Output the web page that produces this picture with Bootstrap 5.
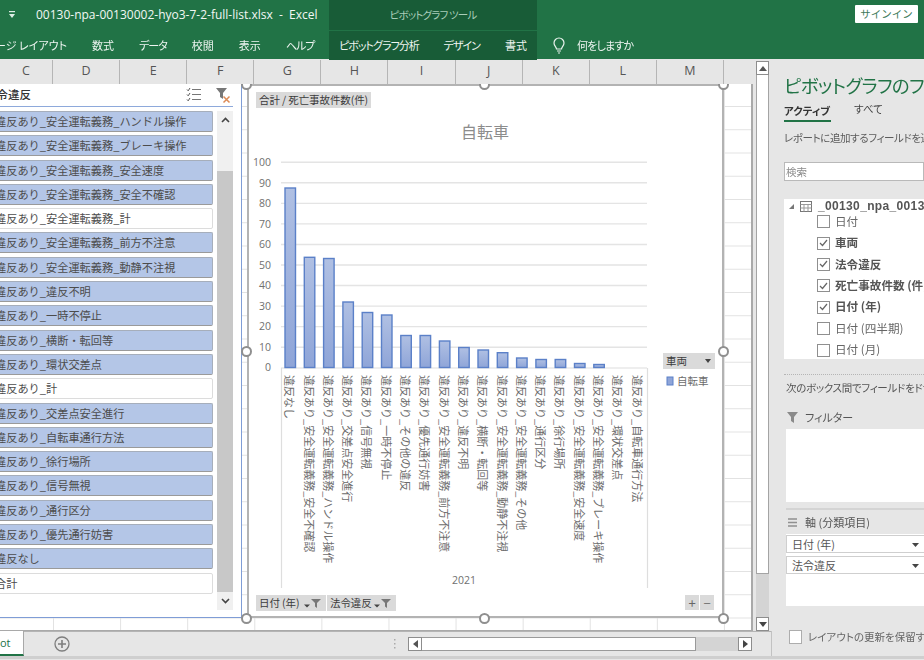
<!DOCTYPE html>
<html lang="ja">
<head>
<meta charset="utf-8">
<title>Excel</title>
<link rel="stylesheet" href="https://cdn.jsdelivr.net/npm/bootstrap@5.3.0/dist/css/bootstrap.min.css">
<style>
html,body{margin:0;width:924px;height:660px;overflow:hidden;background:#e6e6e6}
body{font-family:"Noto Sans CJK JP","Liberation Sans",sans-serif;font-size:11px;color:#444;line-height:1}
.app-frame{width:924px;height:660px;filter:blur(.4px)}
header,.pivot-panel{font-feature-settings:"palt"}
.top-row{display:flex;background:#217346;color:#fff}
.row-title{height:30px}.row-tabs{height:29px}
.seg-left{width:329px;flex:none;overflow:hidden}
.seg-ctx{width:208px;flex:none;background:#185c37}
.row-title .seg-ctx{text-align:center;line-height:30px;color:#a9cdb9;font-size:10.5px;letter-spacing:-.8px}
.qat-icon{margin:0 20px 0 8px;flex:none}
.file-name{font-family:"Open Sans","Liberation Sans",sans-serif;font-size:12px;color:#f2f7f4;white-space:pre;flex:none}
.sign-in{width:63px;height:18px;padding:0;background:#fff;color:#3e7a59;font-size:10.5px;border:0;border-radius:1px;margin:5px 6px 0 auto;line-height:18px}
.tab-txt{font-size:11px;line-height:29px;color:#eef5f1;white-space:nowrap;position:relative;top:1px}
.tabs-left{gap:25px}
.first-tab{margin-left:-16px}
.kana-tab{letter-spacing:-1px}
.tabs-ctx{padding-left:10px;gap:25px}
.ask-txt{margin-left:11px;letter-spacing:-.8px}
.bulb-icon{margin:7px 0 0 15px}
.work-row{height:597px;display:flex}
.sheet-col{width:772px;flex:none;border-right:1px solid #c2c2c2;display:flex;flex-direction:column}
.sheet-upper{flex:1;display:flex;min-height:0}
.sheet-wrap{width:753px;flex:none;display:flex;flex-direction:column;padding-top:1px}
.col-heads{height:24px;display:flex;background:#e6e6e6;flex:none}
.col-head{width:67.1px;flex:none;text-align:center;line-height:22px;font-size:12.5px;color:#555;border-right:1px solid #b5b5b5;font-family:"Open Sans","Liberation Sans",sans-serif}
.col-head.first-col{width:53px}
.grid-area{flex:1;position:relative;overflow:hidden;background-color:#fff;border:solid #a9a9a9;border-width:0 2px 1px 0;
background-image:linear-gradient(90deg,#e2e2e2 1px,transparent 1px),linear-gradient(#e2e2e2 1px,transparent 1px);
background-size:67.1px 100%,100% 23.25px;background-position:53px 0,0 22px}
.vscroll{width:19px;flex:none;padding:2px 3px 0 3px;display:flex;flex-direction:column;background:#e6e6e6}
.sb-btn{background:#fff;border:1px solid #8d8d8d;display:flex;align-items:center;justify-content:center;flex:none}
.v-btn{height:14px}
.v-thumb{height:499px;background:#fff;border:1px solid #a4a4a4;border-top:0;flex:none}
.v-track{flex:1;background:#d4d4d4}
.slicer-box{position:absolute;left:-3px;top:0;width:245px;height:534px;background:#fff;border:solid #7f9dd6;border-width:0 1.5px 1.5px 0;overflow:hidden}
.slicer-head{height:23px;width:236px;border-bottom:1.5px solid #8ea9db;display:flex;align-items:center;position:relative;font-size:11.5px;color:#333;white-space:nowrap}
.slicer-head span{margin-left:-12px;font-weight:500}
.sl-icon{position:absolute;top:3px}
.slicer-body{display:flex;padding-top:4px}
.sl-list{width:216px;display:flex;flex-direction:column;gap:3.3px;flex:none}
.sl-item{height:21px;background:#b4c6e7;border:1px solid #a6aebb;border-bottom:1.5px solid #9a9a9a;border-radius:2px;line-height:19px;font-size:11.2px;color:#4c4c4c;margin-left:-6px;white-space:nowrap;width:222px;padding-left:3px;overflow:hidden}
.sl-item.off{background:#fff;border-color:#dcdcdc}
.sl-scroll{width:16px;margin-left:4px;display:flex;flex-direction:column;height:499px;background:#c8c8c8;flex:none}
.sl-up{height:60px;background:#f0f0f0;display:flex;justify-content:center;padding-top:6px;flex:none}
.sl-down{height:18px;background:#f0f0f0;display:flex;justify-content:center;align-items:center;margin-top:auto;flex:none}
.chart-box{position:absolute;left:247px;top:0;width:477px;height:534px;background:#fff;border:2px solid #b3b3b3;border-top-width:2px}
.chart-svg{display:block;position:absolute;left:-2px;top:-2px}
.chart-tag{position:absolute;background:#dadada;color:#3c3c3c;font-size:10.5px;height:16px;line-height:16px;white-space:nowrap;display:flex;align-items:center;padding:0 3px;letter-spacing:-.1px}
.handle{position:absolute;width:11px;height:11px;border-radius:50%;background:#fff;border:2px solid #8f8f8f}
.tab-bar{height:25px;flex:none;display:flex;align-items:center;border-top:1px solid #b4b4b4;background:#e6e6e6;position:relative}
.sheet-tab{width:24px;height:25px;margin-top:-1px;background:#fff;border-right:1px solid #a8a8a8;border-bottom:2px solid #217346;color:#217346;font-size:11px;line-height:23px;text-align:right;padding-right:13px;flex:none;font-family:"Open Sans",sans-serif}
.add-icon{margin-left:30px}
.split-dots{margin-left:323px}
.hscroll{display:flex;height:14px;margin-left:12px;width:344px}
.h-btn{width:14px}
.h-thumb{width:274px;background:#fff;border:1px solid #9a9a9a;border-left:0;flex:none}
.h-track{flex:1;background:#d4d4d4}
.pivot-panel{flex:1;min-width:0;overflow:hidden;background:#e6e6e6;padding-left:12px;position:relative;white-space:nowrap}
.pv-title{font-size:18.5px;color:#217346;margin:16px 0 0;line-height:20px;font-weight:400;letter-spacing:-.6px}
.pv-tabs{display:flex;gap:23px;margin-top:9px;font-size:10.5px;height:22px;color:#444}
.pv-active{font-weight:700;border-bottom:2px solid #217346;width:47px;height:18px;line-height:13px;color:#333}
.pv-note{font-size:10.5px;margin-top:5px;color:#5c5c5c;height:14px;line-height:14px;letter-spacing:-.4px}
.pv-search{height:19px;margin-top:17px;background:#fff;border:1px solid #b9b9b9;color:#8a8a8a;font-size:10.5px;line-height:17px;padding-left:1px}
.pv-fields{height:160px;margin-top:18px;background:#fff;padding-top:1px;overflow:hidden}
.pv-root{display:flex;align-items:center;height:11px;font-weight:700;font-size:12px;color:#555;font-family:"Liberation Sans",sans-serif;letter-spacing:.35px}
.pv-root svg{flex:none}
.pv-field{display:flex;align-items:center;height:21.4px;padding-left:33px;font-size:11.6px;color:#666}
.pv-field.on{font-weight:700;color:#555}
.cb-box{width:13px;height:13px;flex:none;margin-right:5px;background:#fff;border:1px solid #8f8f8f;display:flex;align-items:center;justify-content:center}
.pv-dots{border-top:1px dotted #b5b5b5;margin-top:15px}
.pv-drag{font-size:10.5px;margin:6px 0 0 2px;color:#555;height:14px;line-height:14px;letter-spacing:-.3px}
.pv-zone-head{display:flex;align-items:center;gap:7px;height:14px;margin-left:3px;font-size:11px;color:#555}
.pv-filter-head{margin-top:15px}
.pv-box{background:#fff;margin-left:2px;height:73px;margin-top:5px}
.pv-split{border-top:2px solid #d4d4d4;margin:6px 0 0 2px}
.pv-axis-head{margin-top:5px}
.pv-axis-box{height:72px;padding-top:1px;display:flex;flex-direction:column;gap:3px}
.pv-pill{height:18px;background:#fff;border:1px solid #cfcfcf;border-width:1px 0 1px 1px;font-size:11px;color:#555;line-height:16px;padding-left:5px;position:relative}
.pill-arrow{position:absolute;left:125px;top:7px}
.pv-hold{display:flex;align-items:center;margin:24px 0 0 5px;font-size:10.5px;color:#666}
.pv-hold .cb-box{margin-right:6px;border-color:#adadad;height:14px}
.bottom-strip{height:3px;background:#cfcfcf}
</style>
</head>
<body>
<div class="app-frame">
  <header>
    <div class="top-row row-title">
      <div class="seg-left d-flex align-items-center">
        <svg class="qat-icon" width="8" height="8" viewBox="0 0 8 8"><rect x="1" y="0" width="6" height="1.2" fill="#dfeee6"/><path d="M1 3h6L4 7z" fill="#dfeee6"/></svg>
        <span class="file-name">00130-npa-00130002-hyo3-7-2-full-list.xlsx  -  Excel</span>
      </div>
      <div class="seg-ctx">ピボットグラフ ツール</div>
      <button type="button" class="btn sign-in">サインイン</button>
    </div>
    <div class="top-row row-tabs">
      <div class="seg-left d-flex tabs-left tab-txt"><span class="first-tab">ページ レイアウト</span><span>数式</span><span class="kana-tab">データ</span><span>校閲</span><span>表示</span><span class="kana-tab">ヘルプ</span></div>
      <div class="seg-ctx d-flex tabs-ctx tab-txt"><span class="kana-tab">ピボットグラフ分析</span><span class="kana-tab">デザイン</span><span>書式</span></div>
      <svg class="bulb-icon" width="14" height="18" viewBox="0 0 14 18" fill="none" stroke="#e8f2ec" stroke-width="1.2"><path d="M4.5 12c0-2-2.5-3-2.5-6a5 5 0 0 1 10 0c0 3-2.5 4-2.5 6z"/><path d="M5 14h4M6 16h2"/></svg>
      <span class="tab-txt ask-txt">何をしますか</span>
    </div>
  </header>
  <div class="work-row">
    <div class="sheet-col">
      <div class="sheet-upper">
        <div class="sheet-wrap">
          <div class="col-heads">
            <div class="col-head first-col">C</div><div class="col-head">D</div><div class="col-head">E</div><div class="col-head">F</div><div class="col-head">G</div><div class="col-head">H</div><div class="col-head">I</div><div class="col-head">J</div><div class="col-head">K</div><div class="col-head">L</div><div class="col-head">M</div>
          </div>
          <div class="grid-area">
            <div class="slicer-box">
              <div class="slicer-head"><span>法令違反</span>
                <svg class="sl-icon" style="left:189px" width="16" height="15" viewBox="0 0 16 15" fill="none" stroke="#777" stroke-width="1"><path d="M6 2.5h9M6 7.5h9M6 12.5h9"/><path d="M1 2.5l1.2 1.3L4 1M1 7.5l1.2 1.3L4 6M1 12.5l1.2 1.3L4 11" stroke="#555"/></svg>
                <svg class="sl-icon" style="left:218px" width="17" height="17" viewBox="0 0 17 17"><path d="M1 1h11L8 6v6L5 10V6z" fill="#777"/><path d="M8.5 9.5l6 6M14.5 9.5l-6 6" stroke="#dc8a55" stroke-width="1.5"/></svg>
              </div>
              <div class="slicer-body">
                <div class="sl-list">
                  <div class="sl-item">違反あり_安全運転義務_ハンドル操作</div>
                  <div class="sl-item">違反あり_安全運転義務_ブレーキ操作</div>
                  <div class="sl-item">違反あり_安全運転義務_安全速度</div>
                  <div class="sl-item">違反あり_安全運転義務_安全不確認</div>
                  <div class="sl-item off">違反あり_安全運転義務_計</div>
                  <div class="sl-item">違反あり_安全運転義務_前方不注意</div>
                  <div class="sl-item">違反あり_安全運転義務_動静不注視</div>
                  <div class="sl-item">違反あり_違反不明</div>
                  <div class="sl-item">違反あり_一時不停止</div>
                  <div class="sl-item">違反あり_横断・転回等</div>
                  <div class="sl-item">違反あり_環状交差点</div>
                  <div class="sl-item off">違反あり_計</div>
                  <div class="sl-item">違反あり_交差点安全進行</div>
                  <div class="sl-item">違反あり_自転車通行方法</div>
                  <div class="sl-item">違反あり_徐行場所</div>
                  <div class="sl-item">違反あり_信号無視</div>
                  <div class="sl-item">違反あり_通行区分</div>
                  <div class="sl-item">違反あり_優先通行妨害</div>
                  <div class="sl-item">違反なし</div>
                  <div class="sl-item off">合計</div>
                </div>
                <div class="sl-scroll">
                  <div class="sl-up"><svg width="9" height="6" viewBox="0 0 9 6" fill="none" stroke="#444" stroke-width="1.6"><path d="M1 5l3.5-3.5L8 5"/></svg></div>
                  <div class="sl-down"><svg width="9" height="6" viewBox="0 0 9 6" fill="none" stroke="#444" stroke-width="1.6"><path d="M1 1l3.5 3.5L8 1"/></svg></div>
                </div>
              </div>
            </div>
            <div class="chart-box">
              <svg class="chart-svg" width="477" height="534" viewBox="247 84 477 534" font-family="'Noto Sans CJK JP',sans-serif">
                <defs><linearGradient id="barFill" x1="0" y1="0" x2="0" y2="1"><stop offset="0" stop-color="#b0c0e3"/><stop offset="1" stop-color="#8fa5d8"/></linearGradient></defs>
                <text x="485" y="138" text-anchor="middle" font-size="16" fill="#8c8c8c">自転車</text>
                <g stroke="#e4e4e4" stroke-width="1.4">
                  <path d="M281 162.3H647M281 182.8H647M281 203.4H647M281 223.9H647M281 244.5H647M281 265H647M281 285.5H647M281 306.1H647M281 326.6H647M281 347.2H647"/>
                </g>
                <path d="M281.5 368V588M647.5 368V588M281 368H647" stroke="#dedede" stroke-width="1.2" fill="none"/>
                <g font-size="10.5" fill="#707070" text-anchor="end" font-family="'Open Sans',sans-serif">
                  <text x="271" y="166">100</text><text x="271" y="186.5">90</text><text x="271" y="207">80</text><text x="271" y="227.5">70</text><text x="271" y="248">60</text><text x="271" y="268.5">50</text><text x="271" y="289">40</text><text x="271" y="309.5">30</text><text x="271" y="330">20</text><text x="271" y="351">10</text><text x="271" y="371">0</text>
                </g>
                <g fill="url(#barFill)" stroke="#5b80c8" stroke-width="1.4">
                  <rect x="285" y="188" width="10.5" height="179.5"/><rect x="304.3" y="257.3" width="10.5" height="110.2"/><rect x="323.6" y="258.5" width="10.5" height="109"/><rect x="342.9" y="302" width="10.5" height="65.5"/><rect x="362.2" y="312.5" width="10.5" height="55"/><rect x="381.5" y="315" width="10.5" height="52.5"/><rect x="400.8" y="335.5" width="10.5" height="32"/><rect x="420.1" y="335.5" width="10.5" height="32"/><rect x="439.4" y="341" width="10.5" height="26.5"/><rect x="458.7" y="347.5" width="10.5" height="20"/><rect x="478" y="350" width="10.5" height="17.5"/><rect x="497.3" y="352.7" width="10.5" height="14.8"/><rect x="516.6" y="358" width="10.5" height="9.5"/><rect x="535.9" y="359.5" width="10.5" height="8"/><rect x="555.2" y="359.5" width="10.5" height="8"/><rect x="574.5" y="363.5" width="10.5" height="4"/><rect x="593.8" y="364.5" width="10.5" height="3"/>
                </g>
                <g font-size="11" fill="#6c6c6c" dominant-baseline="central">
                  <text transform="translate(290.2 375) rotate(90)">違反なし</text>
                  <text transform="translate(309.5 375) rotate(90)">違反あり_安全運転義務_安全不確認</text>
                  <text transform="translate(328.8 375) rotate(90)">違反あり_安全運転義務_ハンドル操作</text>
                  <text transform="translate(348.1 375) rotate(90)">違反あり_交差点安全進行</text>
                  <text transform="translate(367.4 375) rotate(90)">違反あり_信号無視</text>
                  <text transform="translate(386.7 375) rotate(90)">違反あり_一時不停止</text>
                  <text transform="translate(406 375) rotate(90)">違反あり_その他の違反</text>
                  <text transform="translate(425.3 375) rotate(90)">違反あり_優先通行妨害</text>
                  <text transform="translate(444.6 375) rotate(90)">違反あり_安全運転義務_前方不注意</text>
                  <text transform="translate(463.9 375) rotate(90)">違反あり_違反不明</text>
                  <text transform="translate(483.2 375) rotate(90)">違反あり_横断・転回等</text>
                  <text transform="translate(502.5 375) rotate(90)">違反あり_安全運転義務_動静不注視</text>
                  <text transform="translate(521.8 375) rotate(90)">違反あり_安全運転義務_その他</text>
                  <text transform="translate(541.1 375) rotate(90)">違反あり_通行区分</text>
                  <text transform="translate(560.4 375) rotate(90)">違反あり_徐行場所</text>
                  <text transform="translate(579.7 375) rotate(90)">違反あり_安全運転義務_安全速度</text>
                  <text transform="translate(599 375) rotate(90)">違反あり_安全運転義務_ブレーキ操作</text>
                  <text transform="translate(618.3 375) rotate(90)">違反あり_環状交差点</text>
                  <text transform="translate(637.6 375) rotate(90)">違反あり_自転車通行方法</text>
                </g>
                <text x="464" y="584" text-anchor="middle" font-size="10.5" fill="#707070" font-family="'Open Sans',sans-serif">2021</text>
                <rect x="667" y="377" width="6" height="8" fill="#8fa5d8" stroke="#5b80c8"/>
                <text x="677" y="385" font-size="10.5" fill="#6c6c6c">自転車</text>
              </svg>
              <span class="chart-tag" style="left:7px;top:6px">合計 / 死亡事故件数(件)</span>
              <span class="chart-tag" style="left:7px;top:509px;width:70px">日付 (年)
                <svg class="ms-auto" width="20" height="10" viewBox="0 0 20 10"><path d="M1 6.5h6L4 9.5z" fill="#444"/><path d="M8 1h10l-4 4v5l-2-1.5V5z" fill="#777"/></svg></span>
              <span class="chart-tag" style="left:78px;top:509px;width:69px">法令違反
                <svg class="ms-auto" width="20" height="10" viewBox="0 0 20 10"><path d="M1 6.5h6L4 9.5z" fill="#444"/><path d="M8 1h10l-4 4v5l-2-1.5V5z" fill="#777"/></svg></span>
              <span class="chart-tag" style="left:414px;top:267px;width:52px">車両
                <svg class="ms-auto" width="8" height="5" viewBox="0 0 8 5"><path d="M1 0h6L4 4z" fill="#444"/></svg></span>
              <span class="chart-tag justify-content-center" style="left:436px;top:509px;width:14px;padding:0;font-size:13px;color:#666;height:15px">+</span>
              <span class="chart-tag justify-content-center" style="left:451px;top:509px;width:14px;padding:0;font-size:13px;color:#777;height:15px">−</span>
            </div>
            <i class="handle" style="left:241px;top:-5px"></i><i class="handle" style="left:479px;top:-5px"></i><i class="handle" style="left:718px;top:-5px"></i>
            <i class="handle" style="left:241px;top:262px"></i><i class="handle" style="left:718px;top:262px"></i>
            <i class="handle" style="left:241px;top:529px"></i><i class="handle" style="left:479px;top:529px"></i><i class="handle" style="left:718px;top:529px"></i>
          </div>
        </div>
        <div class="vscroll">
          <div class="sb-btn v-btn"><svg width="8" height="5" viewBox="0 0 8 5"><path d="M0 5h8L4 0z" fill="#555"/></svg></div>
          <div class="v-thumb"></div>
          <div class="v-track"></div>
          <div class="sb-btn v-btn"><svg width="8" height="5" viewBox="0 0 8 5"><path d="M0 0h8L4 5z" fill="#444"/></svg></div>
        </div>
      </div>
      <div class="tab-bar">
        <div class="sheet-tab">ot</div>
        <svg class="add-icon" width="16" height="16" viewBox="0 0 16 16" fill="none" stroke="#7e7e7e"><circle cx="8" cy="8" r="7" stroke-width="1.3"/><path d="M8 4v8M4 8h8" stroke-width="1.6"/></svg>
        <svg class="split-dots" width="3" height="12" viewBox="0 0 3 12" fill="#aaa"><rect x="1" y="1" width="1.5" height="1.5"/><rect x="1" y="5" width="1.5" height="1.5"/><rect x="1" y="9" width="1.5" height="1.5"/></svg>
        <div class="hscroll">
          <div class="sb-btn h-btn"><svg width="5" height="8" viewBox="0 0 5 8"><path d="M5 0v8L0 4z" fill="#555"/></svg></div>
          <div class="h-thumb"></div>
          <div class="h-track"></div>
          <div class="sb-btn h-btn"><svg width="5" height="8" viewBox="0 0 5 8"><path d="M0 0v8l5-4z" fill="#444"/></svg></div>
        </div>
      </div>
    </div>
    <aside class="pivot-panel">
      <h2 class="pv-title">ピボットグラフのフィールド</h2>
      <div class="pv-tabs"><span class="pv-active">アクティブ</span><span>すべて</span></div>
      <div class="pv-note">レポートに追加するフィールドを選択してください:</div>
      <div class="pv-search">検索</div>
      <div class="pv-fields">
        <div class="pv-root">
          <svg width="34" height="14" viewBox="0 0 34 14"><path d="M5 10h5V5z" fill="#777"/><g fill="#fff" stroke="#777"><rect x="16.5" y="2.5" width="11" height="10"/></g><path d="M16.5 5.5h11M16.5 9h11M20 5.5v7M24 5.5v7" stroke="#999" fill="none"/></svg>
          <span>_00130_npa_00130002</span>
        </div>
        <div class="pv-field"><span class="cb-box"></span>日付</div>
        <div class="pv-field on"><span class="cb-box"><svg width="9" height="8" viewBox="0 0 9 8" fill="none" stroke="#666" stroke-width="1.2"><path d="M1 4l2.5 2.5L8 1"/></svg></span>車両</div>
        <div class="pv-field on"><span class="cb-box"><svg width="9" height="8" viewBox="0 0 9 8" fill="none" stroke="#666" stroke-width="1.2"><path d="M1 4l2.5 2.5L8 1"/></svg></span>法令違反</div>
        <div class="pv-field on"><span class="cb-box"><svg width="9" height="8" viewBox="0 0 9 8" fill="none" stroke="#666" stroke-width="1.2"><path d="M1 4l2.5 2.5L8 1"/></svg></span>死亡事故件数 (件)</div>
        <div class="pv-field on"><span class="cb-box"><svg width="9" height="8" viewBox="0 0 9 8" fill="none" stroke="#666" stroke-width="1.2"><path d="M1 4l2.5 2.5L8 1"/></svg></span>日付 (年)</div>
        <div class="pv-field"><span class="cb-box"></span>日付 (四半期)</div>
        <div class="pv-field"><span class="cb-box"></span>日付 (月)</div>
      </div>
      <div class="pv-dots"></div>
      <div class="pv-drag">次のボックス間でフィールドをドラッグしてください:</div>
      <div class="pv-zone-head pv-filter-head"><svg width="11" height="11" viewBox="0 0 11 11"><path d="M0 0h11L7 5v6L4 9V5z" fill="#8a8a8a"/></svg>フィルター</div>
      <div class="pv-box"></div>
      <div class="pv-split"></div>
      <div class="pv-zone-head pv-axis-head"><svg width="11" height="9" viewBox="0 0 11 9" fill="none" stroke="#909090" stroke-width="1.4"><path d="M1 1h9M1 4.5h9M1 8h9"/></svg>軸 (分類項目)</div>
      <div class="pv-box pv-axis-box">
        <div class="pv-pill">日付 (年)<svg class="pill-arrow" width="7" height="4" viewBox="0 0 7 4"><path d="M0 0h7L3.5 4z" fill="#444"/></svg></div>
        <div class="pv-pill">法令違反<svg class="pill-arrow" width="7" height="4" viewBox="0 0 7 4"><path d="M0 0h7L3.5 4z" fill="#444"/></svg></div>
      </div>
      <div class="pv-hold"><span class="cb-box"></span>レイアウトの更新を保留する</div>
    </aside>
  </div>
  <div class="bottom-strip"></div>
</div>
</body>
</html>
